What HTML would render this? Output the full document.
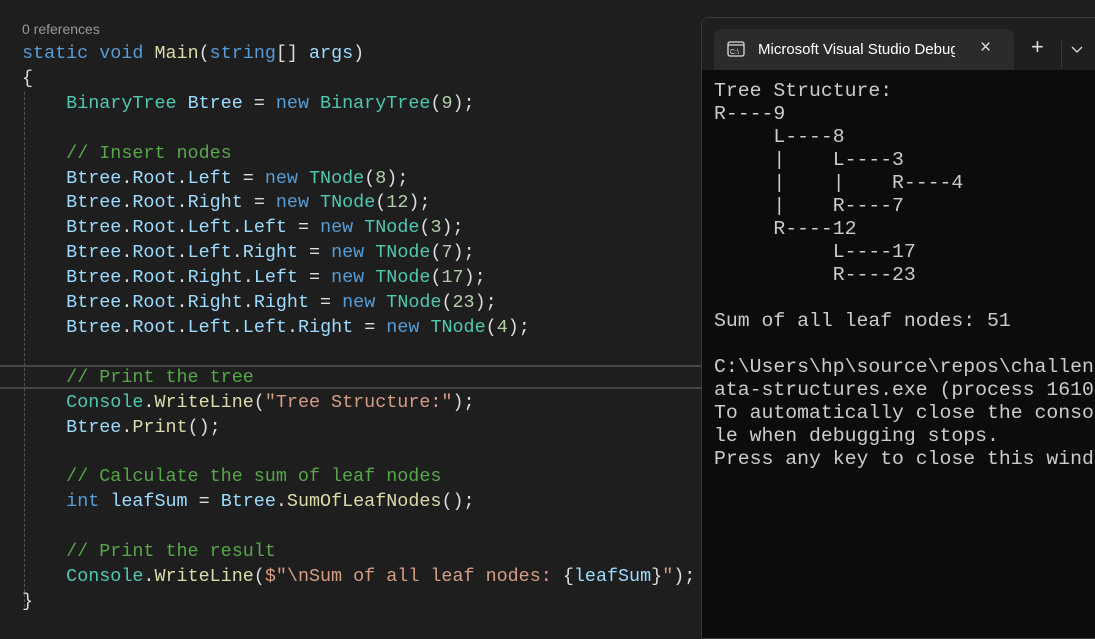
<!DOCTYPE html>
<html><head><meta charset="utf-8"><style>
body{margin:0;width:1095px;height:628px;background:#1e1e1e;overflow:hidden;position:relative;font-family:"Liberation Mono",monospace}
.ed{position:absolute;left:22px;top:0;font-size:18.4px;line-height:24.9px;color:#dcdcdc;white-space:pre}
.ref{position:absolute;left:22px;top:21px;font:14px "Liberation Sans",sans-serif;color:#999}
.k{color:#569cd6}.t{color:#4ec9b0}.v{color:#9cdcfe}.m{color:#dcdcaa}.c{color:#57a64a}.n{color:#b5cea8}.s{color:#d69d85}
.hl{position:absolute;left:0;width:701px;height:2px;background:#464646}
.guide{position:absolute;left:24px;top:92px;height:515px;border-left:1px dashed #555}
.term{position:absolute;left:701px;top:17px;width:400px;height:620px;background:#0c0c0c;border:1px solid #3a3a3a;border-radius:8px 0 0 0}
.bar{position:absolute;left:0;top:0;right:0;height:52px;background:#1f1f1f;border-radius:8px 0 0 0}
.tab{position:absolute;left:12px;top:11px;width:300px;height:41px;background:#2b2b2b;border-radius:8px 8px 0 0;font:15px "Liberation Sans",sans-serif;color:#fff}
.out{position:absolute;left:12px;top:62px;font-size:19.8px;line-height:23px;color:#cccccc;white-space:pre}
</style></head><body>
<div class="ref">0 references</div>
<div class="guide"></div>
<div class="hl" style="top:365px"></div>
<div class="hl" style="top:387px"></div>
<div class="ed" style="top:42px"><span class="k">static</span> <span class="k">void</span> <span class="m">Main</span>(<span class="k">string</span>[] <span class="v">args</span>)
{
    <span class="t">BinaryTree</span> <span class="v">Btree</span> = <span class="k">new</span> <span class="t">BinaryTree</span>(<span class="n">9</span>);

    <span class="c">// Insert nodes</span>
    <span class="v">Btree</span>.<span class="v">Root</span>.<span class="v">Left</span> = <span class="k">new</span> <span class="t">TNode</span>(<span class="n">8</span>);
    <span class="v">Btree</span>.<span class="v">Root</span>.<span class="v">Right</span> = <span class="k">new</span> <span class="t">TNode</span>(<span class="n">12</span>);
    <span class="v">Btree</span>.<span class="v">Root</span>.<span class="v">Left</span>.<span class="v">Left</span> = <span class="k">new</span> <span class="t">TNode</span>(<span class="n">3</span>);
    <span class="v">Btree</span>.<span class="v">Root</span>.<span class="v">Left</span>.<span class="v">Right</span> = <span class="k">new</span> <span class="t">TNode</span>(<span class="n">7</span>);
    <span class="v">Btree</span>.<span class="v">Root</span>.<span class="v">Right</span>.<span class="v">Left</span> = <span class="k">new</span> <span class="t">TNode</span>(<span class="n">17</span>);
    <span class="v">Btree</span>.<span class="v">Root</span>.<span class="v">Right</span>.<span class="v">Right</span> = <span class="k">new</span> <span class="t">TNode</span>(<span class="n">23</span>);
    <span class="v">Btree</span>.<span class="v">Root</span>.<span class="v">Left</span>.<span class="v">Left</span>.<span class="v">Right</span> = <span class="k">new</span> <span class="t">TNode</span>(<span class="n">4</span>);

    <span class="c">// Print the tree</span>
    <span class="t">Console</span>.<span class="m">WriteLine</span>(<span class="s">"Tree Structure:"</span>);
    <span class="v">Btree</span>.<span class="m">Print</span>();

    <span class="c">// Calculate the sum of leaf nodes</span>
    <span class="k">int</span> <span class="v">leafSum</span> = <span class="v">Btree</span>.<span class="m">SumOfLeafNodes</span>();

    <span class="c">// Print the result</span>
    <span class="t">Console</span>.<span class="m">WriteLine</span>(<span class="s">$"\nSum of all leaf nodes: </span>{<span class="v">leafSum</span>}<span class="s">"</span>);
}</div>
<div class="term">
 <div class="bar">
  <div class="tab">
   <svg style="position:absolute;left:13px;top:12px" width="18" height="16" viewBox="0 0 18 16"><rect x="1" y="1" width="16" height="14" rx="2" fill="none" stroke="#ddd" stroke-width="1.3"/><line x1="1" y1="4" x2="17" y2="4" stroke="#ddd" stroke-width="1.2"/><text x="3" y="13" font-size="7" fill="#ddd" font-family="Liberation Sans">C:\</text></svg>
   <span style="position:absolute;left:44px;top:12px;white-space:nowrap;width:197px;overflow:hidden">Microsoft Visual Studio Debug</span>
   <span style="position:absolute;left:266px;top:8px;font-size:19px;color:#ddd">×</span>
  </div>
  <span style="position:absolute;left:329px;top:16px;font:22px 'Liberation Sans',sans-serif;color:#ddd">+</span>
  <div style="position:absolute;left:359px;top:23px;width:1px;height:28px;background:#3a3a3a"></div>
  <svg style="position:absolute;left:369px;top:28px" width="12" height="8"><path d="M1 1 L6 6 L11 1" stroke="#ddd" stroke-width="1.3" fill="none"/></svg>
 </div>
 <div class="out">Tree Structure:
R----9
     L----8
     |    L----3
     |    |    R----4
     |    R----7
     R----12
          L----17
          R----23

Sum of all leaf nodes: 51

C:\Users\hp\source\repos\challen
ata-structures.exe (process 1610
To automatically close the conso
le when debugging stops.
Press any key to close this wind</div>
</div>
</body></html>
